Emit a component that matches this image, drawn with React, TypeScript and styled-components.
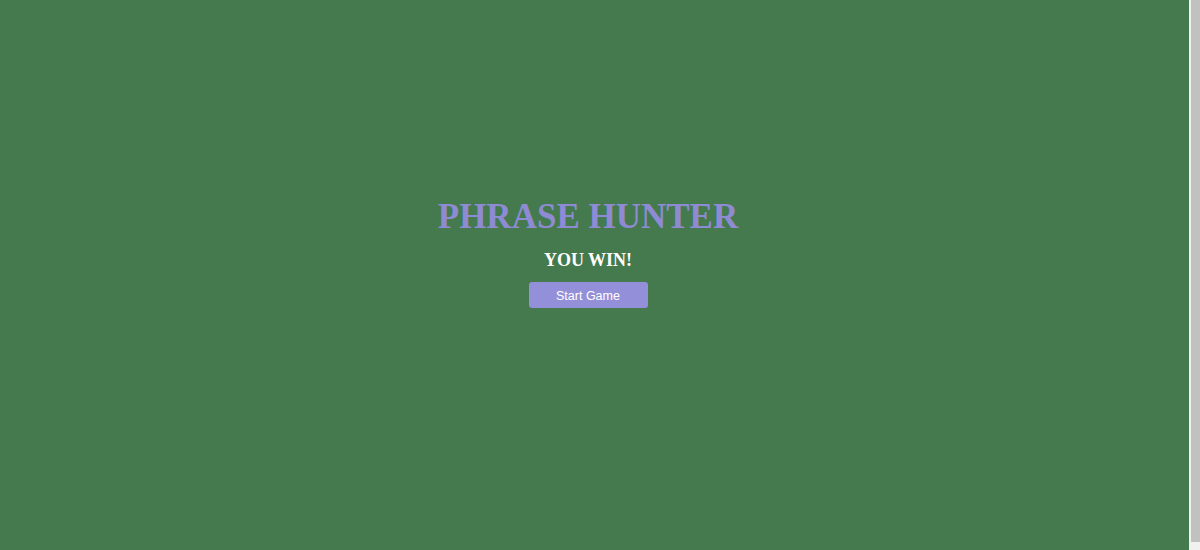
import React from 'react';
import styled, { createGlobalStyle } from 'styled-components';

const GlobalStyle = createGlobalStyle`
  html, body {
    margin: 0;
    padding: 0;
    background: #447a4d;
    overflow: hidden;
  }
`;

const Page = styled.div`
  display: flex;
  height: 100vh;
`;

const Screen = styled.main`
  flex: 1;
  box-sizing: border-box;
  padding: 197px 13px 0 0;
  display: flex;
  flex-direction: column;
  align-items: center;
  background: #447a4d;
`;

const ScrollTrack = styled.div`
  width: 11px;
  display: flex;
  flex-direction: column;
  background: #f1f1f1;
  padding: 0 0 8px 2px;
  box-sizing: border-box;
`;

const ScrollThumb = styled.div`
  flex: 1;
  background: #c1c1c1;
`;

const Title = styled.h1`
  margin: 0;
  font-family: 'Liberation Serif', 'Times New Roman', serif;
  font-weight: bold;
  font-size: 35px;
  line-height: 40px;
  color: #8e8bd4;
`;

const Message = styled.h2`
  margin: 13px 0 0;
  font-family: 'Liberation Serif', 'Times New Roman', serif;
  font-weight: bold;
  font-size: 18px;
  line-height: 20px;
  color: #ffffff;
`;

const StartButton = styled.button`
  margin-top: 12px;
  width: 119px;
  height: 26px;
  padding: 2px 0 0;
  border: none;
  border-radius: 3px;
  background: #938fd8;
  color: #ffffff;
  font-family: 'Liberation Sans', Arial, sans-serif;
  font-size: 12.5px;
  cursor: pointer;
`;

const App = () => {
  return (
    <>
      <GlobalStyle />
      <Page>
        <Screen>
          <Title>PHRASE HUNTER</Title>
          <Message>YOU WIN!</Message>
          <StartButton>Start Game</StartButton>
        </Screen>
        <ScrollTrack>
          <ScrollThumb />
        </ScrollTrack>
      </Page>
    </>
  );
};

export default App;
